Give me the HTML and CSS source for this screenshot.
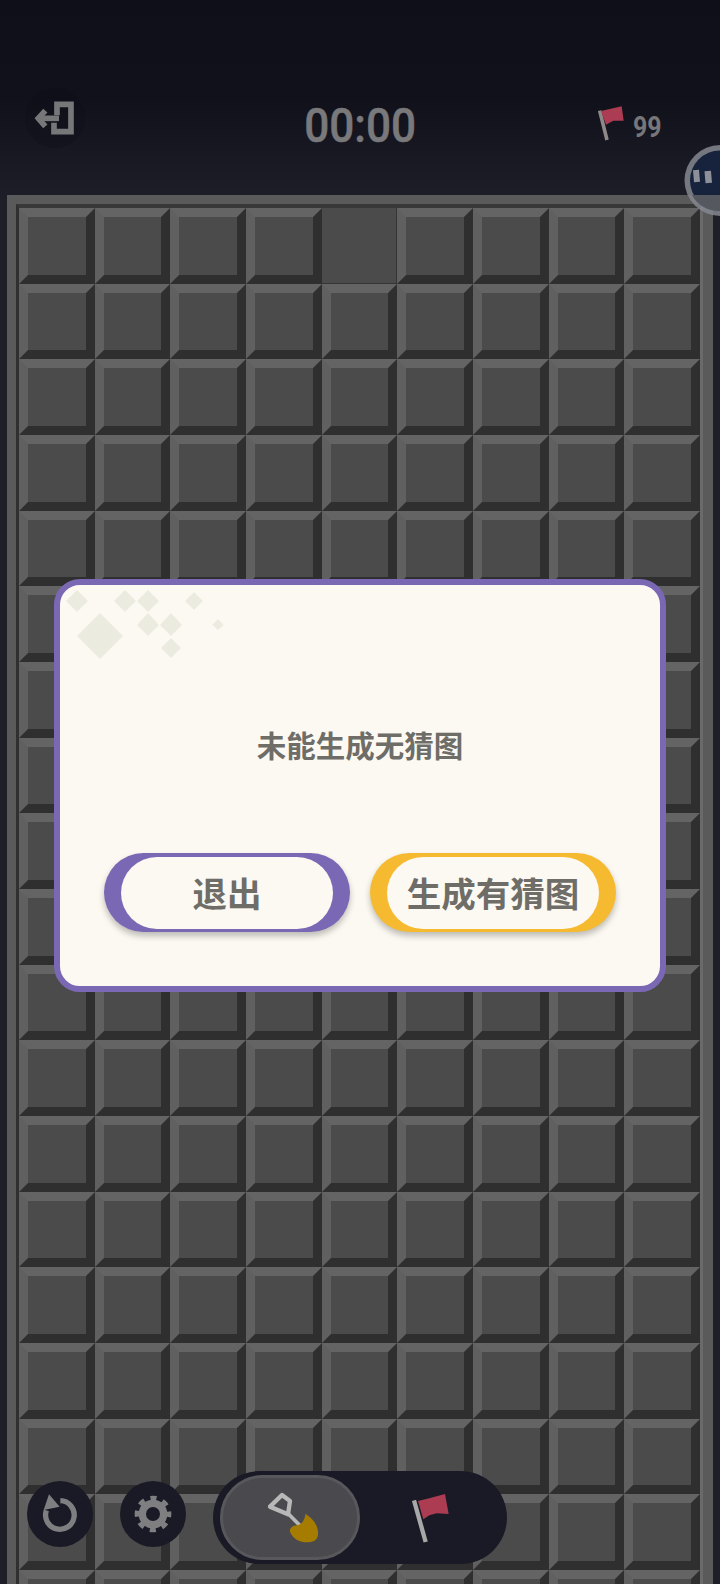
FILE: index.html
```html
<!DOCTYPE html>
<html lang="zh-CN">
<head>
<meta charset="utf-8">
<title>扫雷</title>
<link rel="stylesheet" href="styles.css">
</head>
<body>
<div class="screen">
  <header class="top">
    <div class="top-left">
      <button class="exit" type="button">
        <svg class="exit-icon" viewBox="100 70 130 105"><path class="ico-line" d="M172 113V80H214V162H163V135"/><path class="ico-line" d="M178 122H122"/><path class="ico-line" d="M137 99L116 122L137 146"/></svg>
      </button>
    </div>
    <div class="timer">00:00</div>
    <div class="flags">
      <svg class="flag-small" viewBox="700 75 90 110"><path class="pole" d="M714 92L736 180"/><path class="red" d="M718 93L780 79L786 122L755 122L733 134Z"/></svg>
      <span class="count">99</span>
    </div>
  </header>

  <main class="board">
    <div class="grid">
      <div class="cell"></div><div class="cell"></div><div class="cell"></div><div class="cell"></div><div class="cell flat"></div><div class="cell"></div><div class="cell"></div><div class="cell"></div><div class="cell"></div>
      <div class="cell"></div><div class="cell"></div><div class="cell"></div><div class="cell"></div><div class="cell"></div><div class="cell"></div><div class="cell"></div><div class="cell"></div><div class="cell"></div>
      <div class="cell"></div><div class="cell"></div><div class="cell"></div><div class="cell"></div><div class="cell"></div><div class="cell"></div><div class="cell"></div><div class="cell"></div><div class="cell"></div>
      <div class="cell"></div><div class="cell"></div><div class="cell"></div><div class="cell"></div><div class="cell"></div><div class="cell"></div><div class="cell"></div><div class="cell"></div><div class="cell"></div>
      <div class="cell"></div><div class="cell"></div><div class="cell"></div><div class="cell"></div><div class="cell"></div><div class="cell"></div><div class="cell"></div><div class="cell"></div><div class="cell"></div>
      <div class="cell"></div><div class="cell"></div><div class="cell"></div><div class="cell"></div><div class="cell"></div><div class="cell"></div><div class="cell"></div><div class="cell"></div><div class="cell"></div>
      <div class="cell"></div><div class="cell"></div><div class="cell"></div><div class="cell"></div><div class="cell"></div><div class="cell"></div><div class="cell"></div><div class="cell"></div><div class="cell"></div>
      <div class="cell"></div><div class="cell"></div><div class="cell"></div><div class="cell"></div><div class="cell"></div><div class="cell"></div><div class="cell"></div><div class="cell"></div><div class="cell"></div>
      <div class="cell"></div><div class="cell"></div><div class="cell"></div><div class="cell"></div><div class="cell"></div><div class="cell"></div><div class="cell"></div><div class="cell"></div><div class="cell"></div>
      <div class="cell"></div><div class="cell"></div><div class="cell"></div><div class="cell"></div><div class="cell"></div><div class="cell"></div><div class="cell"></div><div class="cell"></div><div class="cell"></div>
      <div class="cell"></div><div class="cell"></div><div class="cell"></div><div class="cell"></div><div class="cell"></div><div class="cell"></div><div class="cell"></div><div class="cell"></div><div class="cell"></div>
      <div class="cell"></div><div class="cell"></div><div class="cell"></div><div class="cell"></div><div class="cell"></div><div class="cell"></div><div class="cell"></div><div class="cell"></div><div class="cell"></div>
      <div class="cell"></div><div class="cell"></div><div class="cell"></div><div class="cell"></div><div class="cell"></div><div class="cell"></div><div class="cell"></div><div class="cell"></div><div class="cell"></div>
      <div class="cell"></div><div class="cell"></div><div class="cell"></div><div class="cell"></div><div class="cell"></div><div class="cell"></div><div class="cell"></div><div class="cell"></div><div class="cell"></div>
      <div class="cell"></div><div class="cell"></div><div class="cell"></div><div class="cell"></div><div class="cell"></div><div class="cell"></div><div class="cell"></div><div class="cell"></div><div class="cell"></div>
      <div class="cell"></div><div class="cell"></div><div class="cell"></div><div class="cell"></div><div class="cell"></div><div class="cell"></div><div class="cell"></div><div class="cell"></div><div class="cell"></div>
      <div class="cell"></div><div class="cell"></div><div class="cell"></div><div class="cell"></div><div class="cell"></div><div class="cell"></div><div class="cell"></div><div class="cell"></div><div class="cell"></div>
      <div class="cell"></div><div class="cell"></div><div class="cell"></div><div class="cell"></div><div class="cell"></div><div class="cell"></div><div class="cell"></div><div class="cell"></div><div class="cell"></div>
      <div class="cell"></div><div class="cell"></div><div class="cell"></div><div class="cell"></div><div class="cell"></div><div class="cell"></div><div class="cell"></div><div class="cell"></div><div class="cell"></div>
    </div>
  </main>

  <svg class="bubble" viewBox="684 145 36 72"><circle class="bubble-ring" cx="720" cy="180.5" r="35.5"/><circle class="bubble-face" cx="720" cy="180.5" r="30"/><path class="bubble-chin" d="M692 195H720V211A30 30 0 0 1 692 195Z"/><rect class="bubble-eye" x="693.500" y="170" width="6" height="12" transform="rotate(-5 696 176)"/><rect class="bubble-eye" x="705" y="171" width="6.500" height="12" transform="rotate(-5 708 177)"/></svg>

  <nav class="tools">
    <button class="round" type="button">
      <svg class="round-icon" viewBox="81 94 198 198"><path class="ico-thick" d="M181 153A43 43 0 1 1 139 182"/><path class="ico-fill" d="M147 134L131 181L179 171Z"/></svg>
    </button>
    <button class="round" type="button">
      <svg class="round-icon" viewBox="361 94 198 198"><circle class="gear-body" cx="460" cy="193" r="32"/><circle class="gear-teeth" cx="460" cy="193" r="47"/></svg>
    </button>
    <div class="toggle">
      <div class="mode active">
        <svg class="mode-icon shovel" viewBox="160 115 170 165"><path class="shovel-grip" d="M178 165L214 130L238 148L232 188Z"/><path class="shovel-shaft" d="M233 186L280 234"/><path class="shovel-blade" d="M284 187C300 195 320 215 322 240C323 258 318 268 300 271C275 274 250 268 238 240C236 232 242 225 250 222C268 222 282 212 284 187Z"/></svg>
      </div>
      <div class="mode">
        <svg class="mode-icon flag-big" viewBox="600 115 125 160"><path class="pole" d="M612 143L647 268"/><path class="red" d="M624 145L652 138L705 124L716 184L680 182L658 188L640 200Z"/></svg>
      </div>
    </div>
  </nav>

  <div class="overlay">
    <section class="dialog">
      <svg class="sparkle" viewBox="60 586 170 80"><path d="M77 591L88 602L77 613L66 602Z"/><path d="M125 591L136 602L125 613L114 602Z"/><path d="M148 591L159 602L148 613L137 602Z"/><path d="M194 593L203 602L194 611L185 602Z"/><path d="M148 614L159 626L148 637L137 626Z"/><path d="M171 614L182 626L171 637L160 626Z"/><path d="M218 620L223.500 626L218 631L212.500 626Z"/><path d="M100 614L123 637L100 660L77 637Z"/><path d="M171 639L181 649L171 659L161 649Z"/></svg>
      <p class="message">未能生成无猜图</p>
      <div class="actions">
        <button class="pill purple" type="button"><span class="pill-face">退出</span></button>
        <button class="pill amber" type="button"><span class="pill-face">生成有猜图</span></button>
      </div>
    </section>
  </div>
</div>
</body>
</html>
```

FILE: styles.css
```css
* { box-sizing: border-box; }

html, body {
  margin: 0;
  padding: 0;
}

body {
  width: 720px;
  height: 1584px;
  overflow: hidden;
  background: #1e1e28;
}

button {
  border: 0;
  padding: 0;
  font: inherit;
  color: inherit;
}

.screen {
  position: relative;
  width: 720px;
  height: 1584px;
  overflow: hidden;
  background: linear-gradient(#0f0f1a 0, #11111c 100px, #1e1e28 200px, #1e1e28 100%);
  font-family: "Roboto", "Noto Sans CJK SC", sans-serif;
}

/* header */
.top {
  height: 195px;
  padding: 88px 25px 0;
  display: grid;
  grid-template-columns: 1fr auto 1fr;
  align-items: start;
}

.exit {
  width: 60px;
  height: 60px;
  border-radius: 50%;
  background: rgba(10, 10, 20, 0.25);
  display: flex;
  align-items: center;
  justify-content: center;
}

.exit-icon {
  width: 43.300px;
  height: 35px;
  margin-left: -1px;
}

.ico-line {
  fill: none;
  stroke: #77777a;
  stroke-width: 17;
}

.timer {
  font-size: 49px;
  font-weight: 500;
  line-height: 76px;
  color: #79797c;
  -webkit-text-stroke: 0.5px #79797c;
  transform: scaleX(0.9);
}

.flags {
  display: flex;
  align-items: center;
  justify-content: flex-end;
  gap: 8px;
  padding: 13px 34px 0 0;
}

.flag-small {
  width: 30px;
  height: 36.670px;
}

.pole {
  fill: none;
  stroke: #8e8888;
  stroke-width: 11;
}

.red {
  fill: #ac3c52;
}

.count {
  font-size: 30px;
  font-weight: 700;
  line-height: 36px;
  color: #77777a;
  display: block;
  width: 28px;
  transform: scaleX(0.83);
  transform-origin: left center;
  margin-top: 8px;
}

/* board */
.board {
  margin: 0 7px;
  padding: 9px 10px 0 9px;
  background: #5a5a5a;
  height: 1389px;
}

.grid {
  display: grid;
  grid-template-columns: repeat(9, 1fr);
  grid-auto-rows: 75.670px;
  border-top: 4px solid #383838;
  border-left: 3px solid #303030;
  border-right: 3px solid #6a6a6a;
}

.cell {
  background: #4b4b4b;
  border-style: solid;
  border-width: 9px;
  border-color: #646464 #2f2f2f #2f2f2f #606060;
}

.cell.flat {
  border-width: 0 1px 1px 0;
  border-color: #353535;
}

/* floating bubble */
.bubble {
  position: absolute;
  left: 684px;
  top: 145px;
  width: 36px;
  height: 72px;
}

.bubble-ring { fill: #85888f; fill-opacity: 0.85; }
.bubble-face { fill: #17223c; }
.bubble-chin { fill: #55585f; }
.bubble-eye { fill: #8d9098; }

/* bottom tools */
.tools {
  position: absolute;
  left: 27px;
  top: 1471px;
  display: flex;
  align-items: flex-start;
  gap: 27px;
}

.round {
  width: 66px;
  height: 66px;
  margin-top: 10px;
  border-radius: 50%;
  background: #1a1a26;
  display: block;
}

.round-icon {
  display: block;
  width: 66px;
  height: 66px;
}

.ico-thick {
  fill: none;
  stroke: #7f7f82;
  stroke-width: 16;
}

.ico-fill { fill: #7f7f82; }

.gear-body {
  fill: none;
  stroke: #7f7f82;
  stroke-width: 22;
}

.gear-teeth {
  fill: none;
  stroke: #7f7f82;
  stroke-width: 16;
  stroke-dasharray: 18 18.910;
  stroke-dashoffset: 9;
}

.toggle {
  width: 294px;
  height: 93px;
  padding: 4px 7px;
  border-radius: 47px;
  background: #1a1a26;
  display: flex;
  align-items: center;
}

.mode {
  width: 140px;
  height: 85px;
  border-radius: 43px;
  display: flex;
  align-items: center;
  justify-content: center;
}

.mode.active {
  background: #4a4a4e;
  border: 3px solid #57575c;
}

.mode-icon { display: block; }

.shovel {
  width: 56.670px;
  height: 55px;
  margin-left: 4px;
}

.shovel-grip {
  fill: none;
  stroke: #b8b8b8;
  stroke-width: 13;
  stroke-linejoin: round;
}

.shovel-shaft {
  fill: none;
  stroke: #b8b8b8;
  stroke-width: 11;
}

.shovel-blade { fill: #a67c00; }

.flag-big {
  width: 41.670px;
  height: 53.330px;
  margin-left: 2px;
}

.flag-big .pole { stroke: #a8a8a8; stroke-width: 13; }

/* dialog */
.overlay {
  position: absolute;
  inset: 0;
  display: flex;
  align-items: flex-start;
  justify-content: center;
  padding-top: 579px;
}

.dialog {
  position: relative;
  width: 612px;
  height: 413px;
  border: 6.500px solid #7a68b5;
  border-radius: 26px;
  background: #fcf9f2;
  padding-top: 139px;
  overflow: hidden;
}

.sparkle {
  position: absolute;
  left: 0;
  top: 0;
  width: 170px;
  height: 80px;
  fill: #ecebdf;
}

.message {
  margin: 0 0 89px;
  height: 40px;
  font-family: "Noto Sans CJK SC", sans-serif;
  font-size: 29.500px;
  font-weight: 700;
  line-height: 40px;
  color: #6f6d68;
  text-align: center;
}

.actions {
  display: flex;
  justify-content: center;
  gap: 20px;
}

.pill {
  width: 246px;
  height: 79px;
  padding: 4px 17px 3px;
  border-radius: 40px;
  box-shadow: 0 4px 6px rgba(0, 0, 0, 0.25);
  display: block;
}

.purple { background: #7a68b5; }
.amber { background: #f6ba30; }

.pill-face {
  display: flex;
  align-items: center;
  justify-content: center;
  height: 72px;
  padding-bottom: 2px;
  border-radius: 36px;
  background: #fcf9f2;
  font-family: "Noto Sans CJK SC", sans-serif;
  font-size: 34.500px;
  font-weight: 700;
  line-height: 68px;
  color: #6f6d68;
}
```
